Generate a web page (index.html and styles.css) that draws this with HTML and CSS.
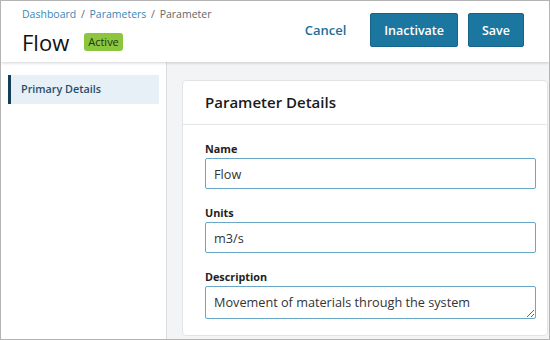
FILE: index.html
```html
<!DOCTYPE html>
<html lang="en">
<head>
    <meta charset="UTF-8">
    <meta name="viewport" content="width=device-width, initial-scale=1.0">
    <title>Flow - Parameter</title>
    <link rel="stylesheet" href="styles.css">
</head>
<body>
    <div class="app">
        <div class="topbar">
            <div class="topbar-left">
                <div class="breadcrumb">
                    <a href="#">Dashboard</a>
                    <span class="sep">/</span>
                    <a href="#">Parameters</a>
                    <span class="sep">/</span>
                    <span class="current">Parameter</span>
                </div>
                <div class="title-row">
                    <h1>Flow</h1>
                    <span class="badge">Active</span>
                </div>
            </div>
            <div class="actions">
                <a href="#" class="btn-link">Cancel</a>
                <button class="btn">Inactivate</button>
                <button class="btn">Save</button>
            </div>
        </div>

        <div class="body">
            <div class="sidebar">
                <div class="nav-item active">Primary Details</div>
            </div>
            <div class="main">
                <div class="card">
                    <div class="card-header">Parameter Details</div>
                    <div class="card-body">
                        <div class="field">
                            <label for="name">Name</label>
                            <input id="name" type="text" value="Flow">
                        </div>
                        <div class="field">
                            <label for="units">Units</label>
                            <input id="units" type="text" value="m3/s">
                        </div>
                        <div class="field">
                            <label for="desc">Description</label>
                            <textarea id="desc" rows="1">Movement of materials through the system</textarea>
                        </div>
                    </div>
                </div>
            </div>
        </div>
    </div>
</body>
</html>
```

FILE: styles.css
```css
* {
    margin: 0;
    padding: 0;
    box-sizing: border-box;
}

body {
    font-family: 'Open Sans', 'Liberation Sans', Arial, sans-serif;
    background: white;
    color: #222;
}

.app {
    width: 550px;
    height: 340px;
    border: 1px solid #b4b4b4;
    display: flex;
    flex-direction: column;
    overflow: hidden;
}

/* header */
.topbar {
    height: 61px;
    flex-shrink: 0;
    display: flex;
    justify-content: space-between;
    align-items: flex-start;
    padding: 0 25px 0 21px;
    background: white;
    box-shadow: 0 1px 3px rgba(0,0,0,0.18);
    position: relative;
    z-index: 1;
}

.breadcrumb {
    font-size: 10.5px;
    line-height: 16px;
    margin-top: 5px;
    color: #666;
}

.breadcrumb a {
    color: #3a86b6;
    text-decoration: none;
}

.breadcrumb .sep {
    color: #666;
    margin: 0 2px;
}

.title-row {
    display: flex;
    align-items: center;
    margin-top: 6px;
}

.title-row h1 {
    font-size: 22px;
    font-weight: 400;
    line-height: 28px;
    color: #111;
}

.badge {
    margin-left: 15px;
    background: #8cc63f;
    color: #1f3510;
    font-size: 11px;
    line-height: 18px;
    padding: 0 4px;
    border-radius: 3px;
}

.actions {
    display: flex;
    align-items: center;
    margin-top: 12px;
}

.btn-link {
    color: #1a6f9a;
    text-decoration: none;
    font-size: 13px;
    font-weight: 600;
    margin-right: 14px;
}

.btn {
    font-family: inherit;
    background: #1b76a0;
    color: white;
    border: 1px solid #17648a;
    border-radius: 2px;
    font-size: 12.5px;
    font-weight: 600;
    height: 34px;
    padding: 0 13px;
    margin-left: 10px;
    cursor: pointer;
}

/* layout */
.body {
    flex: 1;
    display: flex;
    min-height: 0;
}

.sidebar {
    width: 166px;
    flex-shrink: 0;
    border-right: 1px solid #dcdde0;
    padding: 13px 7px 0 7px;
}

.nav-item {
    height: 29px;
    line-height: 28px;
    font-size: 10.8px;
    font-weight: 600;
    color: #1f4f6c;
    background: #e7f0f6;
    border-left: 3px solid #153f58;
    padding-left: 10px;
}

.main {
    flex: 1;
    background: #f3f4f6;
    padding: 18px 1px 3px 15px;
    display: flex;
}

.card {
    flex: 1;
    background: white;
    border: 1px solid #e2e3e6;
    border-radius: 4px;
}

.card-header {
    height: 44px;
    line-height: 42px;
    padding-left: 22px;
    font-size: 15px;
    font-weight: 600;
    color: #1a1a1a;
    border-bottom: 1px solid #e5e6e8;
}

.card-body {
    padding: 15px 11px 0 22px;
}

.field {
    margin-bottom: 15px;
}

.field label {
    display: block;
    font-size: 10.8px;
    font-weight: 700;
    line-height: 18px;
    color: #222;
}

.field input,
.field textarea {
    display: block;
    width: 100%;
    font-family: inherit;
    font-size: 12.7px;
    color: #333;
    border: 1px solid #6aa7c6;
    border-radius: 2px;
    padding: 0 8px;
    background: white;
}

.field input {
    height: 31px;
}

.field textarea {
    height: 33px;
    line-height: 18px;
    padding-top: 6px;
    resize: vertical;
    overflow: hidden;
}
```
